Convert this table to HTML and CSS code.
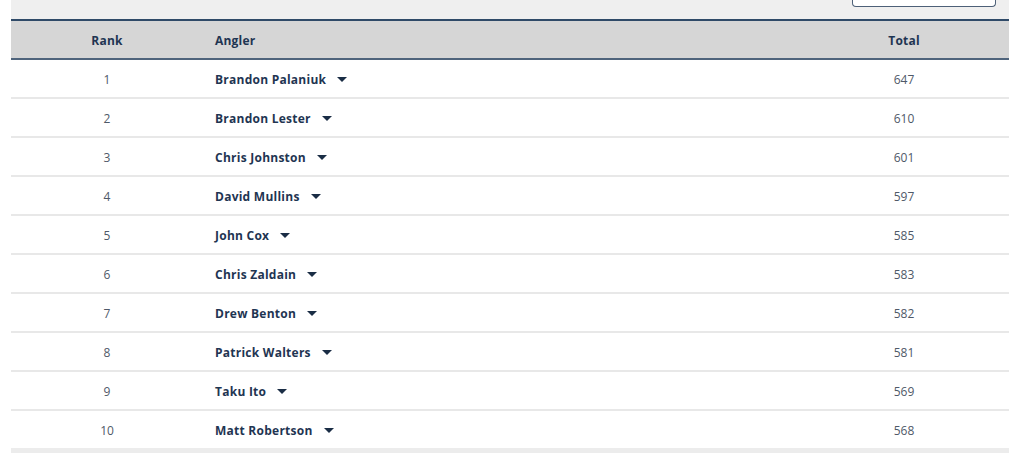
FILE: index.html
```html
<!DOCTYPE html>
<html>
<head>
<meta charset="utf-8">
<link rel="stylesheet" href="styles.css">
</head>
<body>
<div class="wrap">
  <div class="toolbar">
    <div class="search"></div>
  </div>
  <table class="board">
    <thead>
      <tr><th class="c-rank">Rank</th><th class="c-name">Angler</th><th class="c-total">Total</th></tr>
    </thead>
    <tbody>
      <tr><td class="c-rank">1</td><td class="c-name"><span class="nm">Brandon Palaniuk</span><span class="caret"></span></td><td class="c-total">647</td></tr>
      <tr><td class="c-rank">2</td><td class="c-name"><span class="nm">Brandon Lester</span><span class="caret"></span></td><td class="c-total">610</td></tr>
      <tr><td class="c-rank">3</td><td class="c-name"><span class="nm">Chris Johnston</span><span class="caret"></span></td><td class="c-total">601</td></tr>
      <tr><td class="c-rank">4</td><td class="c-name"><span class="nm">David Mullins</span><span class="caret"></span></td><td class="c-total">597</td></tr>
      <tr><td class="c-rank">5</td><td class="c-name"><span class="nm">John Cox</span><span class="caret"></span></td><td class="c-total">585</td></tr>
      <tr><td class="c-rank">6</td><td class="c-name"><span class="nm">Chris Zaldain</span><span class="caret"></span></td><td class="c-total">583</td></tr>
      <tr><td class="c-rank">7</td><td class="c-name"><span class="nm">Drew Benton</span><span class="caret"></span></td><td class="c-total">582</td></tr>
      <tr><td class="c-rank">8</td><td class="c-name"><span class="nm">Patrick Walters</span><span class="caret"></span></td><td class="c-total">581</td></tr>
      <tr><td class="c-rank">9</td><td class="c-name"><span class="nm">Taku Ito</span><span class="caret"></span></td><td class="c-total">569</td></tr>
      <tr><td class="c-rank">10</td><td class="c-name"><span class="nm">Matt Robertson</span><span class="caret"></span></td><td class="c-total">568</td></tr>
    </tbody>
  </table>
  <div class="foot"></div>
</div>
</body>
</html>
```
FILE: styles.css
```css
html, body { margin: 0; padding: 0; background: #fff; }
body { font-family: "Open Sans", "Liberation Sans", sans-serif; }
.wrap { margin: 0 15px 0 11px; background: #efefef; }
.toolbar { height: 19px; display: flex; justify-content: flex-end; padding-right: 13px; }
.search { width: 142px; height: 7px; margin-top: -1px; background: #fff; border: 1px solid #4d6078; border-top: none; border-radius: 0 0 4px 4px; }
.board { width: 100%; border-collapse: collapse; background: #fff; }
.board thead tr { background: #d6d6d6; border-top: 2px solid #2f4a68; border-bottom: 2px solid #4f647c; }
.board th { height: 36px; padding: 1px 0 0; font-size: 12px; font-weight: 700; color: #1f3552; text-align: left; letter-spacing: 0.2px; }
.board td { height: 36px; padding: 1px 0 0; font-size: 12px; color: #4f5968; border-bottom: 2px solid #e8e8e8; }
.board tbody tr:last-child td { border-bottom: none; }
.board .c-rank { width: 192px; text-align: center; }
.board .c-name { padding-left: 12px; }
.board .c-total { width: 210px; text-align: center; }
.board td.c-name { color: #1f3552; font-weight: 700; letter-spacing: 0.25px; }
.nm { vertical-align: middle; }
.caret { display: inline-block; vertical-align: middle; margin-left: 11px; width: 0; height: 0; border-left: 5px solid transparent; border-right: 5px solid transparent; border-top: 5px solid #1a2d45; }
.foot { height: 8px; background: #ececec; }
```
